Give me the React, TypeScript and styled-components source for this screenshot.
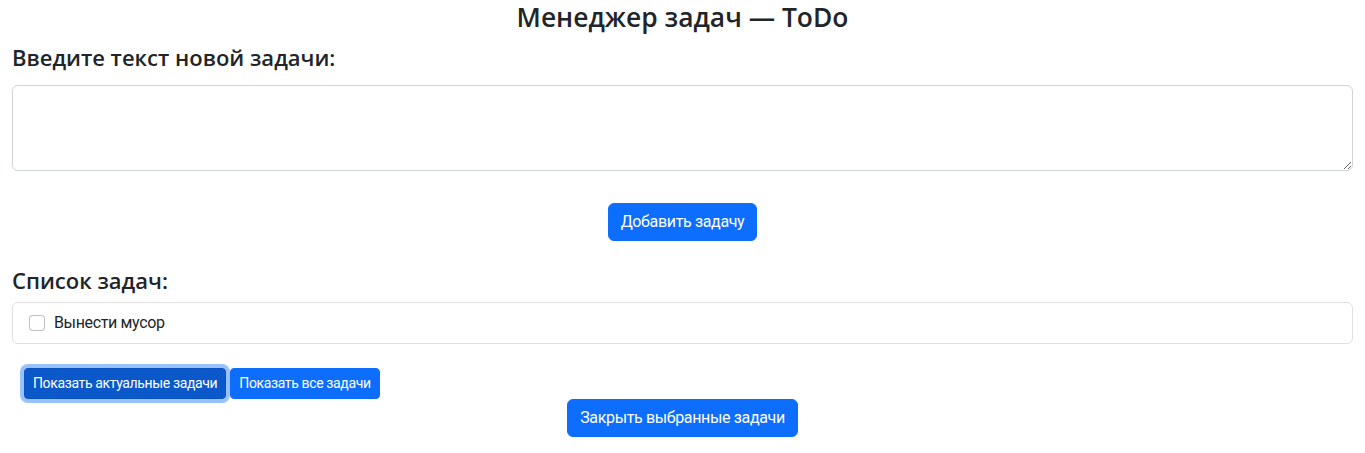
import React, { useState } from "react";
import styled, { createGlobalStyle, css } from "styled-components";

const GlobalStyle = createGlobalStyle`
  body {
    margin: 0;
    font-family: Roboto, "Noto Sans", "Liberation Sans", sans-serif;
    font-size: 16px;
    line-height: 1.5;
    letter-spacing: -0.022em;
    color: #212529;
    background: #fff;
  }
  *, *::before, *::after { box-sizing: border-box; }
`;

const Page = styled.div`
  padding: 2px 12px 16px;
`;

const Title = styled.h1`
  margin: 0 0 10px;
  font-family: "Open Sans", Roboto, sans-serif;
  font-size: 26.4px;
  font-weight: 600;
  line-height: 1.2;
  letter-spacing: 0;
  text-align: center;
`;

const SectionTitle = styled.h4<{ $gap?: number }>`
  margin: ${(p) => p.$gap ?? 0}px 0 0;
  font-family: "Open Sans", Roboto, sans-serif;
  font-size: 22px;
  font-weight: 600;
  line-height: 1.2;
  letter-spacing: 0;
`;

const TaskInput = styled.textarea`
  display: block;
  width: 100%;
  margin-top: 15px;
  padding: 6px 12px;
  font: inherit;
  color: #212529;
  border: 1px solid #ced4da;
  border-radius: 6px;
  resize: vertical;
  outline: none;
`;

const Centered = styled.div<{ $gap?: number }>`
  display: flex;
  justify-content: center;
  margin-top: ${(p) => p.$gap ?? 0}px;
`;

const Button = styled.button<{ $small?: boolean; $active?: boolean }>`
  font-family: inherit;
  font-size: 16px;
  line-height: 1.5;
  letter-spacing: -0.022em;
  padding: 6px 12px;
  color: #fff;
  background: #0d6efd;
  border: 1px solid #0d6efd;
  border-radius: 6px;
  cursor: pointer;
  ${(p) =>
    p.$small &&
    css`
      font-size: 14px;
      letter-spacing: -0.026em;
      padding: 4px 8px;
      border-radius: 4px;
    `}
  ${(p) =>
    p.$active &&
    css`
      background: #0a58ca;
      border-color: #0a53be;
      box-shadow: 0 0 0 4px rgba(49, 132, 253, 0.5);
    `}
`;

const TaskList = styled.ul`
  list-style: none;
  margin: 9px 0 0;
  padding: 0;
  border: 1px solid #dfdfdf;
  border-radius: 6px;
`;

const TaskItem = styled.li`
  display: flex;
  align-items: center;
  gap: 9px;
  padding: 8px 16px;
`;

const Check = styled.input`
  appearance: none;
  width: 16px;
  height: 16px;
  margin: 0;
  border: 1px solid rgba(0, 0, 0, 0.25);
  border-radius: 4px;
  background: #fff;
  &:checked {
    background: #0d6efd;
    border-color: #0d6efd;
  }
`;

const FilterRow = styled.div`
  display: flex;
  gap: 4px;
  margin: 24px 0 0 12px;
`;

export default function App() {
  const [filter, setFilter] = useState<"active" | "all">("active");
  const [done, setDone] = useState(false);
  return (
    <>
      <GlobalStyle />
      <Page>
        <Title>Менеджер задач — ToDo</Title>
        <SectionTitle>Введите текст новой задачи:</SectionTitle>
        <TaskInput rows={3} />
        <Centered $gap={32}>
          <Button>Добавить задачу</Button>
        </Centered>
        <SectionTitle $gap={26}>Список задач:</SectionTitle>
        <TaskList>
          <TaskItem>
            <Check type="checkbox" checked={done} onChange={() => setDone(!done)} />
            <span>Вынести мусор</span>
          </TaskItem>
        </TaskList>
        <FilterRow>
          <Button $small $active={filter === "active"} onClick={() => setFilter("active")}>
            Показать актуальные задачи
          </Button>
          <Button $small $active={filter === "all"} onClick={() => setFilter("all")}>
            Показать все задачи
          </Button>
        </FilterRow>
        <Centered>
          <Button>Закрыть выбранные задачи</Button>
        </Centered>
      </Page>
    </>
  );
}
